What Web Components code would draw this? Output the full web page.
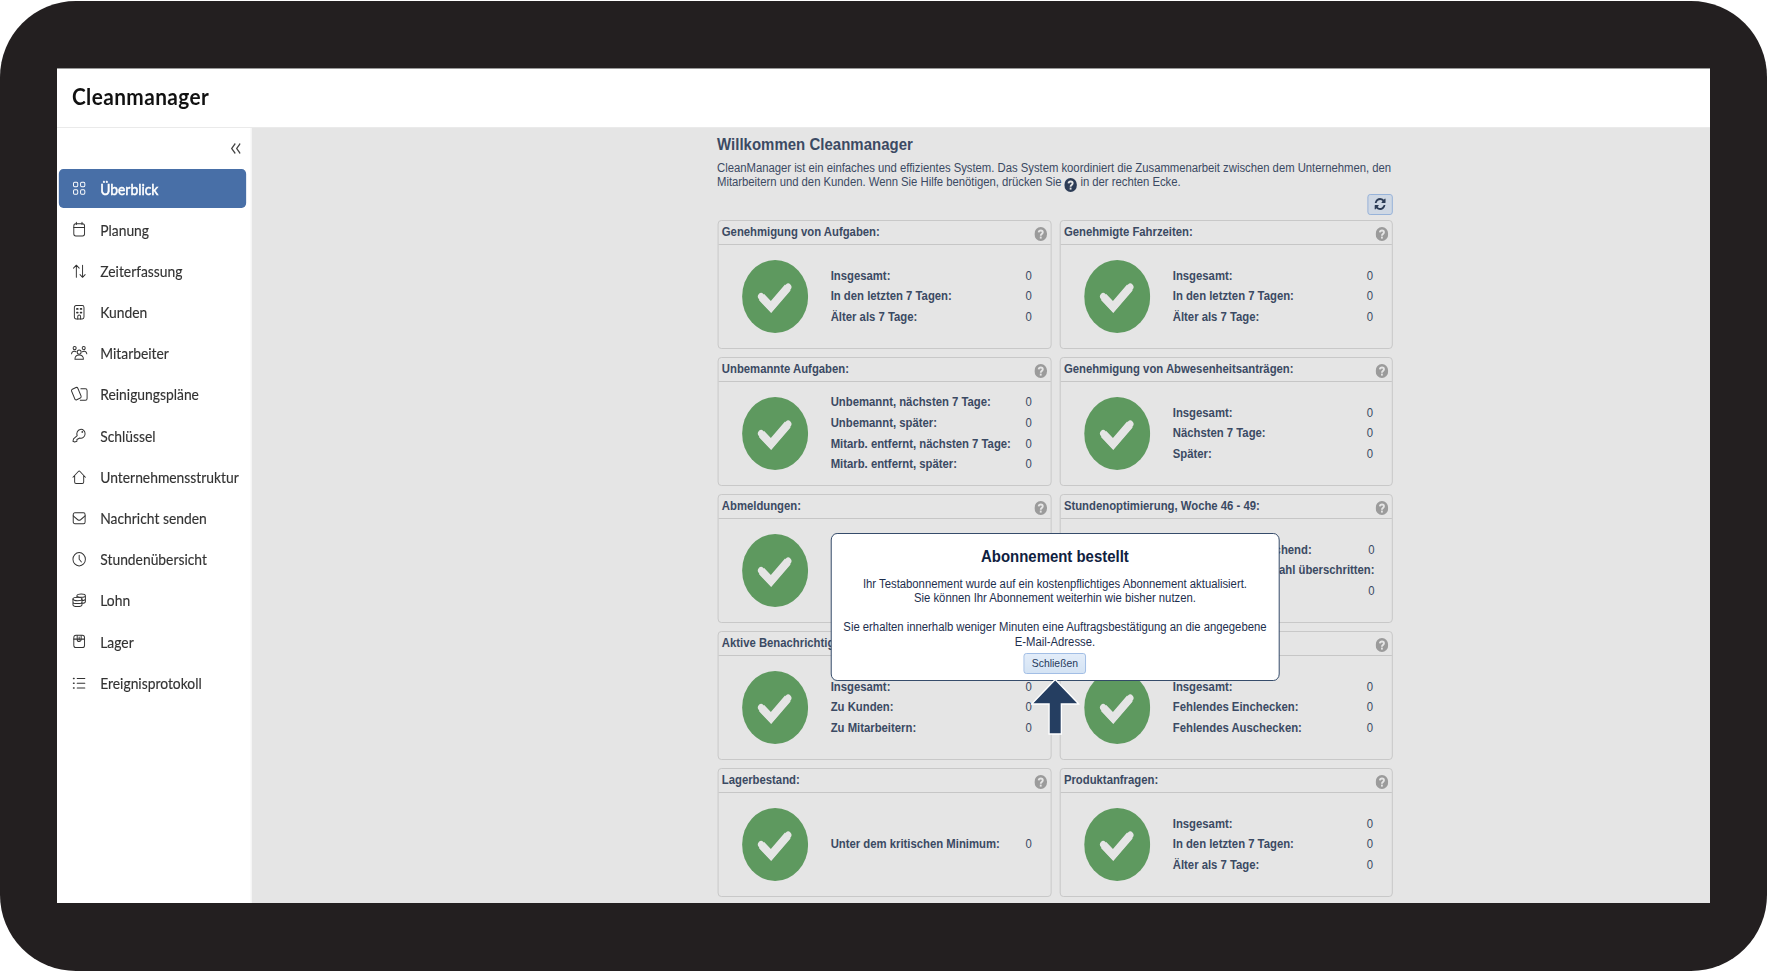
<!DOCTYPE html>
<html lang="de">
<head>
<meta charset="utf-8">
<title>Cleanmanager</title>
<style>
  html, body { margin: 0; height: 100%; overflow: hidden; background: #fff; }
  body { font-family: "Liberation Sans", Arial, sans-serif; }
</style>
</head>
<body>
<cm-device>
  <cm-app></cm-app>
</cm-device>

<script>
const define = (name, cls) => customElements.define(name, cls);

// 24x24 line icons for the menu
const ICONS = {
  grid: '<rect x="2" y="2" width="7.5" height="7.5" rx="2"/><rect x="14.5" y="2" width="7.5" height="7.5" rx="2"/><rect x="2" y="14.5" width="7.5" height="7.5" rx="2"/><rect x="14.5" y="14.5" width="7.5" height="7.5" rx="2"/>',
  calendar: '<rect x="2.5" y="3" width="19" height="20" rx="3.5"/><path d="M2.5 9h19M7 .5V4M17 .5V4"/>',
  arrows: '<path d="M7 22V2M2 7l5-5 5 5M18 2v20M13.5 17.5L18 22l4.500-4.500"/>',
  building: '<rect x="3.500" y="1" width="17" height="22" rx="3"/><path d="M9.500 23v-4a2.500 2.500 0 0 1 5 0v4"/><path d="M8 6.500h1.500M14.500 6.500H16M8 12.500h1.500M14.500 12.500H16" stroke-width="3"/>',
  people: '<circle cx="12" cy="10" r="3.500"/><path d="M4.500 22c0-5 3-7 7.500-7s7.500 2 7.500 7z"/><circle cx="4" cy="3.500" r="2.700"/><circle cx="20" cy="3.500" r="2.700"/><path d="M-1.500 13c.5-4 4-5 8-3.500M25.500 13c-.5-4-4-5-8-3.500"/>',
  cards: '<rect x="1" y="1.500" width="12" height="19" rx="2.500" transform="rotate(-24 7 11)"/><path d="M15 3h8q3 0 3 3v13q0 3-3 3H14"/>',
  key: '<path d="M8.500 12.500A7.300 7.300 0 1 1 13 16.500L8 19v3l-4 1-3-1 1-4z"/><circle cx="17.500" cy="6.500" r=".7"/>',
  house: '<path d="M1 12L10.500 2.500q1.500-1.500 3 0L23 12M4 9.500V20q0 2.500 2.500 2.500h11Q20 22.500 20 20V9.500"/>',
  mail: '<rect x="1.500" y="3" width="21" height="18" rx="3"/><path d="M1.500 8l8 6.500q2.500 1.800 5 0l8-6.500"/>',
  clock: '<circle cx="12" cy="12" r="11"/><path d="M12 5.500V12l4 4.500"/>',
  coins: '<ellipse cx="9" cy="10" rx="8" ry="2.800"/><path d="M1 10v9.500c0 4 16 4 16 0V10M1 14.700c0 3.800 16 3.800 16 0"/><path d="M8 7V4.500C8 .5 23 .5 23 4.500V14c0 2-3 3-6 3M8 4.500c0 3.500 15 3.500 15 0M17 12.500c3 0 6-1 6-3"/>',
  box: '<rect x="2.500" y="2" width="19" height="20.500" rx="4"/><path d="M2.500 8.500h19M8.500 2.500v6.500a3.500 3.500 0 0 0 7 0V2.500M12 5v5"/>',
  list: '<path d="M8.500 4H22M8.500 12H22M8.500 20H22"/><path d="M2 4h1M2 12h1M2 20h1" stroke-width="2.500"/>'
};

const MENU = [
  ['grid', 'Überblick'], ['calendar', 'Planung'], ['arrows', 'Zeiterfassung'],
  ['building', 'Kunden'], ['people', 'Mitarbeiter'], ['cards', 'Reinigungspläne'],
  ['key', 'Schlüssel'], ['house', 'Unternehmensstruktur'], ['mail', 'Nachricht senden'],
  ['clock', 'Stundenübersicht'], ['coins', 'Lohn'], ['box', 'Lager'], ['list', 'Ereignisprotokoll']
];

// title, then [label, value] rows
const CARDS = [
  ['Genehmigung von Aufgaben:', [['Insgesamt:', 0], ['In den letzten 7 Tagen:', 0], ['Älter als 7 Tage:', 0]]],
  ['Genehmigte Fahrzeiten:', [['Insgesamt:', 0], ['In den letzten 7 Tagen:', 0], ['Älter als 7 Tage:', 0]]],
  ['Unbemannte Aufgaben:', [['Unbemannt, nächsten 7 Tage:', 0], ['Unbemannt, später:', 0], ['Mitarb. entfernt, nächsten 7 Tage:', 0], ['Mitarb. entfernt, später:', 0]]],
  ['Genehmigung von Abwesenheitsanträgen:', [['Insgesamt:', 0], ['Nächsten 7 Tage:', 0], ['Später:', 0]]],
  ['Abmeldungen:', []],
  ['Stundenoptimierung, Woche 46 - 49:', [['Stund. nicht ausreichend:', 0], ['Zulässige Stundenzahl überschritten:', ''], ['', 0]]],
  ['Aktive Benachrichtigungen:', [['Insgesamt:', 0], ['Zu Kunden:', 0], ['Zu Mitarbeitern:', 0]]],
  ['', [['Insgesamt:', 0], ['Fehlendes Einchecken:', 0], ['Fehlendes Auschecken:', 0]]],
  ['Lagerbestand:', [['Unter dem kritischen Minimum:', 0]]],
  ['Produktanfragen:', [['Insgesamt:', 0], ['In den letzten 7 Tagen:', 0], ['Älter als 7 Tage:', 0]]]
];

class CmDevice extends HTMLElement {
  constructor() {
    super();
    this.attachShadow({ mode: 'open' }).innerHTML = `
      <style>
        :host {
          display: block;
          box-sizing: border-box;
          width: 1767px;
          height: 970px;
          margin-top: 1px;
          padding: 67px 57px 68px;
          border-radius: 76px;
          background: #231f20;
        }
        .screen {
          width: 1653px;
          height: 835px;
          overflow: hidden;
          background: #fff;
        }
      </style>
      <div class="screen"><slot></slot></div>
    `;
  }
}

class CmHelp extends HTMLElement {
  constructor() {
    super();
    this.attachShadow({ mode: 'open' }).innerHTML = `
      <style>
        :host { display: inline-block; width: 14px; height: 14px; color: #9b9b9b; }
        svg { display: block; width: 100%; height: 100%; }
      </style>
      <svg viewBox="0 0 14 14" fill="none">
        <circle cx="7" cy="7" r="7" fill="currentColor"/>
        <path d="M4.700 5.400C5 2.900 9.300 3 9.300 5.300C9.300 6.900 7 6.800 7 8.700" stroke="#e5e5e5" stroke-width="2"/>
        <rect x="6" y="9.600" width="2" height="2" fill="#e5e5e5"/>
      </svg>
    `;
  }
}

class CmMenuItem extends HTMLElement {
  connectedCallback() {
    this.attachShadow({ mode: 'open' }).innerHTML = `
      <style>
        :host {
          display: flex;
          align-items: center;
          box-sizing: border-box;
          width: 207px;
          height: 39px;
          padding-left: 15.500px;
          border-radius: 5px;
          color: #333;
          font: 15.300px Lato, sans-serif;
          white-space: nowrap;
          -webkit-text-stroke: .15px currentColor;
        }
        :host([active]) {
          background: #486fa7;
          color: #fff;
          -webkit-text-stroke: .5px #fff;
        }
        svg {
          width: 15px;
          height: 14.500px;
          margin-right: 15.500px;
          overflow: visible;
          fill: none;
          stroke: currentColor;
          stroke-width: 1.700;
          stroke-linecap: round;
          stroke-linejoin: round;
        }
      </style>
      <svg viewBox="0 0 24 24" preserveAspectRatio="none">${ICONS[this.getAttribute('icon')]}</svg>
      <slot></slot>
    `;
  }
}

class CmSidebar extends HTMLElement {
  connectedCallback() {
    this.attachShadow({ mode: 'open' }).innerHTML = `
      <style>
        :host {
          display: block;
          box-sizing: border-box;
          width: 215px;
          background: #fff;
          border-right: 1px solid #eee;
        }
        .collapse { display: flex; justify-content: flex-end; padding: 14.500px 11.500px 0 0; height: 26.500px; }
        .collapse svg { width: 11px; height: 11px; fill: none; stroke: #444; stroke-width: 1.300; }
        nav { display: flex; flex-direction: column; gap: 2.200px; padding-left: 1.800px; }
      </style>
      <div class="collapse"><svg viewBox="0 0 11 11"><path d="M5 .5L1 5.500l4 5M10.500 .5l-4 5 4 5"/></svg></div>
      <nav>
        ${MENU.map(([icon, text], i) => `<cm-menu-item icon="${icon}" ${i === 0 ? 'active' : ''}>${text}</cm-menu-item>`).join('')}
      </nav>
    `;
  }
}

class CmCard extends HTMLElement {
  set rows(rows) {
    this.shadowRoot.querySelector('dl').innerHTML =
      rows.map(([label, value]) => `<div><dt>${label}</dt><dd>${value}</dd></div>`).join('');
  }

  constructor() {
    super();
    this.attachShadow({ mode: 'open' }).innerHTML = `
      <style>
        :host {
          display: flex;
          flex-direction: column;
          box-sizing: border-box;
          height: 129px;
          border: 1px solid #c6c6c6;
          border-radius: 4px;
          color: #3b4a63;
          font-size: 12.500px;
        }
        header {
          display: flex;
          justify-content: space-between;
          box-sizing: border-box;
          height: 24px;
          padding: 4px 4px 0 3.500px;
          border-bottom: 1px solid #c6c6c6;
          font-weight: bold;
          line-height: 14px;
        }
        cm-help { margin-top: 1.500px; }
        .body { display: flex; flex: 1; align-items: center; padding: 0 21px 0 26px; }
        .check { width: 73px; height: 73px; margin-right: 24.800px; flex: none; }
        dl { flex: 1; margin: 0; }
        dl div { display: flex; justify-content: space-between; height: 20.600px; line-height: 20.600px; white-space: nowrap; }
        dt { font-weight: bold; }
        dd { margin: 0; }
      </style>
      <header><span><slot></slot></span><cm-help></cm-help></header>
      <div class="body">
        <svg class="check" viewBox="0 0 73 73">
          <circle cx="36.500" cy="36.500" r="36.500" fill="#5e995f"/>
          <path d="M21.500 37L32 47L50.500 27.500" fill="none" stroke="#e5e5e5" stroke-width="8.500"/>
          <path d="M21 36.500L32 47.500L51 27" fill="none" stroke="#e5e5e5" stroke-width="7" stroke-linecap="round"/>
        </svg>
        <dl></dl>
      </div>
    `;
  }
}

class CmButton extends HTMLElement {
  constructor() {
    super();
    this.attachShadow({ mode: 'open' }).innerHTML = `
      <style>
        :host {
          display: inline-flex;
          align-items: center;
          justify-content: center;
          box-sizing: border-box;
          border: 1px solid #9dbbe4;
          border-radius: 3px;
          background: linear-gradient(#e3edf9, #d4e3f4);
        }
      </style>
      <slot></slot>
    `;
  }
}

class CmDialog extends HTMLElement {
  constructor() {
    super();
    this.attachShadow({ mode: 'open' }).innerHTML = `
      <style>
        :host {
          display: block;
          box-sizing: border-box;
          width: 496px;
          height: 148px;
          padding-top: 13px;
          border: 1px solid #2b4263;
          border-radius: 7px;
          background: #fff;
          color: #1d2f4e;
          font-size: 12.500px;
          line-height: 14.400px;
          text-align: center;
        }
        h2 { margin: 0 0 11px; font-size: 16.500px; line-height: 19px; color: #0f2140; }
        p { margin: 0 0 14.400px; letter-spacing: -.01px; }
        p:last-of-type { margin-bottom: 3.500px; }
        cm-button { width: 69px; height: 21px; font-size: 11.500px; color: #26395a; }
        .pointer { position: absolute; left: 220px; top: 144px; width: 54px; height: 57px; }
      </style>
      <h2>Abonnement bestellt</h2>
      <p>Ihr Testabonnement wurde auf ein kostenpflichtiges Abonnement aktualisiert.<br>Sie können Ihr Abonnement weiterhin wie bisher nutzen.</p>
      <p>Sie erhalten innerhalb weniger Minuten eine Auftragsbestätigung an die angegebene<br>E-Mail-Adresse.</p>
      <cm-button>Schließen</cm-button>
      <svg class="pointer" viewBox="0 0 54 57">
        <path d="M27 1.500L53 26H33.800V56H20.200V26H1Z" fill="#253e61" stroke="#fff" stroke-width="1.500"/>
      </svg>
    `;
  }
}

class CmOverview extends HTMLElement {
  connectedCallback() {
    this.attachShadow({ mode: 'open' }).innerHTML = `
      <style>
        :host {
          display: block;
          position: relative;
          flex: 1;
          box-sizing: border-box;
          padding: 6.500px 0 0 514.300px;
          background: #e5e5e5;
          color: #3b4a63;
          font-size: 12.500px;
        }
        .content { width: 747px; }
        h1 { margin: 0 0 7.500px; font-size: 16.500px; line-height: 19px; letter-spacing: .05px; }
        p { margin: 0; height: 29px; line-height: 14.400px; letter-spacing: -.02px; white-space: nowrap; }
        p cm-help { color: #2c3c56; margin: -5px 0; vertical-align: -3px; position: relative; top: -2px; }
        .tools { display: flex; justify-content: flex-end; padding: 3.500px 0 5px; }
        .tools cm-button { width: 28.500px; height: 21.500px; background: #cfd8e4; border-color: #94b0d8; }
        .tools svg { width: 14px; height: 14px; fill: #2c3c56; }
        .cards { display: grid; grid-template-columns: 369px 368px; gap: 8px 9px; padding-left: .8px; }
        cm-dialog { position: absolute; left: 639.700px; top: 405px; }
      </style>
      <div class="content">
        <h1>Willkommen Cleanmanager</h1>
        <p>CleanManager ist ein einfaches und effizientes System. Das System koordiniert die Zusammenarbeit zwischen dem Unternehmen, den<br>Mitarbeitern und den Kunden. Wenn Sie Hilfe benötigen, drücken Sie <cm-help></cm-help> in der rechten Ecke.</p>
        <div class="tools"><cm-button><svg viewBox="0 0 1792 1792"><path d="M1639 1056q0 5-1 7-64 268-268 434.500t-478 166.500q-146 0-282.500-55t-243.500-157l-129 129q-19 19-45 19t-45-19-19-45v-448q0-26 19-45t45-19h448q26 0 45 19t19 45-19 45l-137 137q71 66 161 102t187 36q134 0 250-65t186-179q11-17 53-117 8-23 30-23h192q13 0 22.500 9.500t9.500 22.500zm25-800v448q0 26-19 45t-45 19h-448q-26 0-45-19t-19-45 19-45l138-138q-148-137-349-137-134 0-250 65t-186 179q-11 17-53 117-8 23-30 23h-199q-13 0-22.500-9.500t-9.500-22.500v-7q65-268 270-434.500t480-166.500q146 0 284 55.500t245 156.500l130-129q19-19 45-19t45 19 19 45z"/></svg></cm-button></div>
        <div class="cards"></div>
      </div>
      <cm-dialog></cm-dialog>
    `;
    const grid = this.shadowRoot.querySelector('.cards');
    for (const [title, rows] of CARDS) {
      const card = document.createElement('cm-card');
      card.textContent = title;
      card.rows = rows;
      grid.appendChild(card);
    }
  }
}

class CmApp extends HTMLElement {
  connectedCallback() {
    this.attachShadow({ mode: 'open' }).innerHTML = `
      <style>
        /* the app is laid out wider than the device and condensed to fit */
        :host {
          display: flex;
          flex-direction: column;
          box-sizing: border-box;
          width: 1826.500px;
          height: 835px;
          transform: scaleX(.905);
          transform-origin: 0 0;
        }
        .bar {
          box-sizing: border-box;
          flex: none;
          height: 60px;
          padding: 12px 0 0 16.500px;
          border-top: 1px solid #999;
          border-bottom: 1px solid #eaeaea;
          font: bold 23px/30px Lato, sans-serif;
          letter-spacing: .45px;
          color: #111;
        }
        .main { display: flex; flex: 1; min-height: 0; }
      </style>
      <div class="bar">Cleanmanager</div>
      <div class="main">
        <cm-sidebar></cm-sidebar>
        <cm-overview></cm-overview>
      </div>
    `;
  }
}

define('cm-device', CmDevice);
define('cm-help', CmHelp);
define('cm-menu-item', CmMenuItem);
define('cm-sidebar', CmSidebar);
define('cm-button', CmButton);
define('cm-card', CmCard);
define('cm-dialog', CmDialog);
define('cm-overview', CmOverview);
define('cm-app', CmApp);
</script>
</body>
</html>
